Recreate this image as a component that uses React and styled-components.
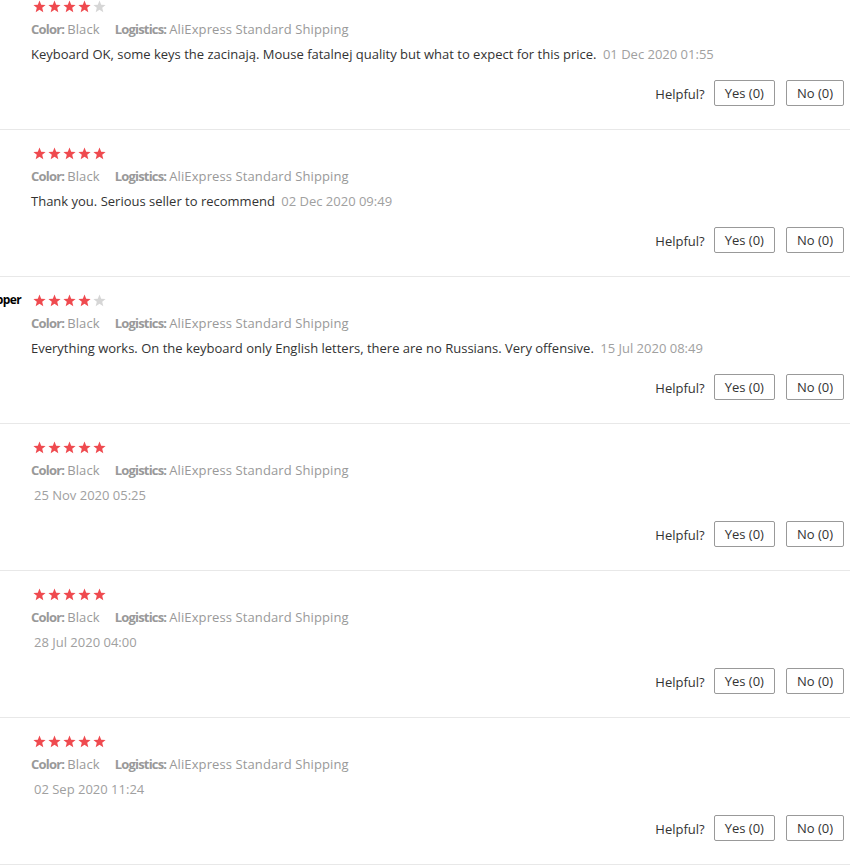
import React from 'react';
import styled, { createGlobalStyle } from 'styled-components';

const GlobalStyle = createGlobalStyle`
  body {
    margin: 0;
    background: #fff;
    overflow: hidden;
    font-family: "Open Sans", "Liberation Sans", sans-serif;
    color: #333;
  }
`;

const List = styled.div`
  width: 960px;
  margin: -17px 0 0 -110px;
`;

const Review = styled.div`
  display: flex;
  padding: 16px 0 23px;
  border-bottom: 1px solid #e8e8e8;
`;

const User = styled.div`
  width: 131px;
  padding-right: 10px;
  flex-shrink: 0;
  text-align: right;
  font-size: 12px;
  font-weight: 700;
  color: #000;
  line-height: 14px;
  letter-spacing: -0.6px;
  white-space: nowrap;
`;

const Body = styled.div`
  flex: 1;
  padding-right: 6px;
`;

const Stars = styled.div`
  display: flex;
  gap: 2px;
  height: 14px;
  margin-left: 2px;
  align-items: center;
`;

const Meta = styled.div`
  margin-top: 6px;
  line-height: 20px;
  font-size: 13px;
  color: #999;
`;

const Label = styled.span`
  font-weight: 700;
  letter-spacing: -0.8px;
  margin-right: 3px;
  margin-left: ${p => (p.$gap ? '15px' : '0')};
`;

const Value = styled.span`
  letter-spacing: 0.1px;
`;

const Text = styled.div`
  margin-top: 5px;
  line-height: 20px;
  font-size: 13px;
  color: #333;
`;

const Date = styled.span`
  margin-left: 3px;
  color: #a0a0a0;
  font-size: 13px;
`;

const Footer = styled.div`
  margin-top: 16px;
  display: flex;
  justify-content: flex-end;
  align-items: center;
`;

const Helpful = styled.span`
  font-size: 13px;
  color: #333;
  margin-right: 9px;
  margin-top: 2px;
`;

const Vote = styled.button`
  height: 26px;
  padding: 0 10px;
  margin-left: ${p => (p.$first ? '0' : '11px')};
  background: #fff;
  border: 1px solid #999;
  border-radius: 2px;
  font-family: inherit;
  font-size: 13px;
  color: #333;
`;

const Star = ({ on }) => (
  <svg width="13" height="13" viewBox="0 0 24 24">
    <polygon
      points="12,1 15.1,8.6 23.3,9.2 17,14.5 19,22.6 12,18.2 5,22.6 7,14.5 0.7,9.2 8.9,8.6"
      fill={on ? '#ef4a4f' : '#d6d6d6'}
    />
  </svg>
);

const reviews = [
  { stars: 4, text: 'Keyboard OK, some keys the zacinają. Mouse fatalnej quality but what to expect for this price.', date: '01 Dec 2020 01:55' },
  { stars: 5, text: 'Thank you. Serious seller to recommend', date: '02 Dec 2020 09:49' },
  { stars: 4, user: 'AliExpress Shopper', text: 'Everything works. On the keyboard only English letters, there are no Russians. Very offensive.', date: '15 Jul 2020 08:49' },
  { stars: 5, text: '', date: '25 Nov 2020 05:25' },
  { stars: 5, text: '', date: '28 Jul 2020 04:00' },
  { stars: 5, text: '', date: '02 Sep 2020 11:24' },
];

export default function App() {
  return (
    <>
      <GlobalStyle />
      <List>
        {reviews.map((r, i) => (
          <Review key={i}>
            <User>{r.user}</User>
            <Body>
              <Stars>
                {[1, 2, 3, 4, 5].map(n => <Star key={n} on={n <= r.stars} />)}
              </Stars>
              <Meta>
                <Label>Color:</Label><Value>Black</Value>
                <Label $gap>Logistics:</Label><Value>AliExpress Standard Shipping</Value>
              </Meta>
              <Text>
                {r.text}{r.text ? ' ' : ''}<Date>{r.date}</Date>
              </Text>
              <Footer>
                <Helpful>Helpful?</Helpful>
                <Vote $first>Yes (0)</Vote>
                <Vote>No (0)</Vote>
              </Footer>
            </Body>
          </Review>
        ))}
      </List>
    </>
  );
}
